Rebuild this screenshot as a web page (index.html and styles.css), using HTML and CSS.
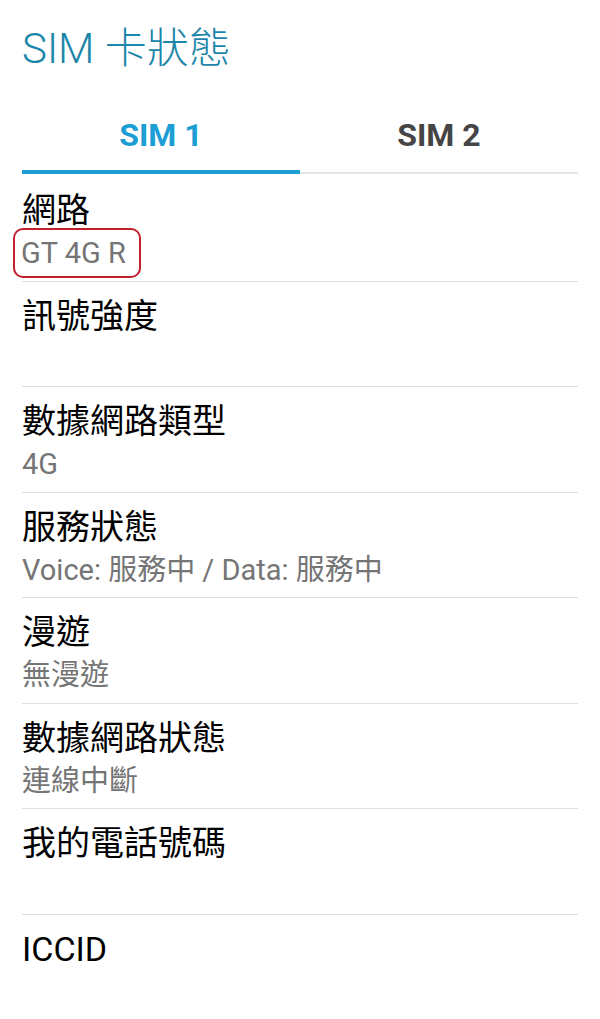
FILE: index.html
```html
<!DOCTYPE html>
<html>
<head>
  <title>SIM 卡狀態</title>
  <link rel="stylesheet" href="styles.css">
</head>
<body>
  <h1 class="page-title">SIM 卡狀態</h1>

  <div class="tabs">
    <div class="tab active">SIM 1</div>
    <div class="tab">SIM 2</div>
  </div>

  <ul class="status-list">
    <li class="status-row">
      <div class="label">網路</div>
      <div class="value"><span class="marked">GT 4G R</span></div>
    </li>
    <li class="status-row">
      <div class="label">訊號強度</div>
      <div class="value"></div>
    </li>
    <li class="status-row">
      <div class="label">數據網路類型</div>
      <div class="value">4G</div>
    </li>
    <li class="status-row">
      <div class="label">服務狀態</div>
      <div class="value">Voice: 服務中 / Data: 服務中</div>
    </li>
    <li class="status-row">
      <div class="label">漫遊</div>
      <div class="value">無漫遊</div>
    </li>
    <li class="status-row">
      <div class="label">數據網路狀態</div>
      <div class="value">連線中斷</div>
    </li>
    <li class="status-row">
      <div class="label">我的電話號碼</div>
      <div class="value"></div>
    </li>
    <li class="status-row last">
      <div class="label">ICCID</div>
      <div class="value"></div>
    </li>
  </ul>
</body>
</html>
```

FILE: styles.css
```css
/* SIM status screen */
body {
  margin: 0;
  background: #fff;
  font-family: Roboto, "Noto Sans CJK TC", sans-serif;
  overflow: hidden;
}
.page-title {
  margin: 0;
  padding: 21px 22px 0;
  font-size: 42px;
  font-weight: 300;
  line-height: 56px;
  color: #1b86a9;
}

/* tabs */
.tabs {
  display: flex;
  margin: 0 22px;
}
.tab {
  flex: 1;
  text-align: center;
  padding: 38px 0 17px;
  font-size: 32px;
  font-weight: bold;
  line-height: 40px;
  color: #454545;
  border-bottom: 2px solid #e6e6e6;
}
.tab.active {
  color: #1c9ed4;
  padding-bottom: 15px;
  border-bottom: 4px solid #1c9ed4;
}

/* rows */
.status-list {
  list-style: none;
  margin: 2px 22px 0;
  padding: 0;
}
.status-row {
  box-sizing: border-box;
  height: 105.5px;
  padding-top: 14px;
  border-bottom: 1px solid #dedede;
}
.status-row.last {
  border-bottom: none;
}
.status-row .label {
  font-size: 34px;
  line-height: 40px;
  color: #000;
}
.status-row .value {
  font-size: 29px;
  line-height: 46px;
  height: 46px;
  color: #757575;
}
.marked {
  display: inline-block;
  margin: -3px 0 -3px -9px;
  padding: 0 13px 0 6px;
  border: 2.5px solid #c3202f;
  border-radius: 10px;
}
```
